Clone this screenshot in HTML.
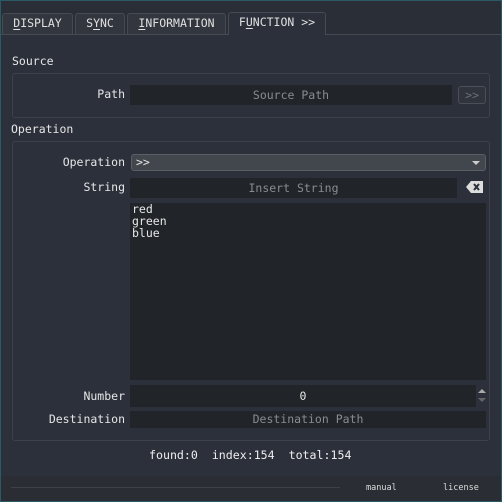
<!DOCTYPE html><html><head><style>
*{box-sizing:border-box;margin:0;padding:0}
body{width:502px;height:502px;background:#2a2e36;font-family:"DejaVu Sans Mono","Liberation Mono",monospace;font-size:11.5px;color:#e6e6e6;position:relative;overflow:hidden}
u{text-decoration:underline;text-underline-offset:2px}
.frame{position:absolute;left:0;top:0;width:502px;height:502px;border:1px solid #2b5a66;}
.a{position:absolute}
.tab{position:absolute;top:13px;height:21px;background:#32363e;border:1px solid #454a53;border-bottom:none;border-radius:3px 3px 0 0;text-align:center;line-height:19px;color:#e0e0e0}
.panel{position:absolute;left:1px;top:34px;width:500px;height:442px;background:#2c303b;border-top:1px solid #454a53}
.box{position:absolute;border:1px solid #3c414c;border-radius:3px}
.inp{position:absolute;background:#212428;color:#8a8d90;text-align:center}
.lbl{position:absolute;text-align:right;width:121px;left:4px}
.foot{position:absolute;left:1px;top:476px;width:500px;height:25px;background:#2a2e34}
</style></head><body>
<div class="tab" style="left:2px;width:71px"><u>D</u>ISPLAY</div>
<div class="tab" style="left:75px;width:50px">S<u>Y</u>NC</div>
<div class="tab" style="left:127px;width:99px"><u>I</u>NFORMATION</div>
<div class="tab" style="left:228px;top:12px;height:23px;width:98px;background:#2c303b;z-index:2">F<u>U</u>NCTION &gt;&gt;</div>
<div class="panel"></div>
<div class="a" style="left:12px;top:54px">Source</div>
<div class="box" style="left:12px;top:73px;width:478px;height:45px"></div>
<div class="lbl" style="top:87px">Path</div>
<div class="inp" style="left:130px;top:85px;width:322px;height:20px;line-height:20px">Source Path</div>
<div class="a" style="left:458px;top:86px;width:28px;height:18px;border:1px solid #4a4f58;border-radius:3px;background:#30343c;color:#6a7078;text-align:center;line-height:16px">&gt;&gt;</div>
<div class="a" style="left:11px;top:122px">Operation</div>
<div class="box" style="left:12px;top:141px;width:478px;height:300px"></div>
<div class="lbl" style="top:155px">Operation</div>
<div class="a" style="left:131px;top:154px;width:355px;height:17px;background:#42474d;border:1px solid #5a5f66;border-radius:3px;padding-left:4px;line-height:15px">&gt;&gt;<span style="position:absolute;right:5px;top:6px;border:4px solid transparent;border-top:4px solid #ccc;border-bottom:0"></span></div>
<div class="lbl" style="top:180px">String</div>
<div class="inp" style="left:130px;top:178px;width:327px;height:20px;line-height:20px">Insert String</div>
<svg class="a" style="left:466px;top:181px" width="17" height="12" viewBox="0 0 17 12"><path d="M5 0H17V12H5L0 6Z" fill="#ddd"/><path d="M8 3L13 9M13 3L8 9" stroke="#2c303b" stroke-width="2"/></svg>
<div class="a" style="left:130px;top:203px;width:356px;height:177px;background:#212428;color:#e8e8e8;padding:0 2px;line-height:12px">red<br>green<br>blue</div>
<div class="lbl" style="top:389px">Number</div>
<div class="inp" style="left:130px;top:385px;width:346px;height:22px;line-height:22px;color:#e8e8e8">0</div>
<div class="a" style="left:478px;top:389px;border:4px solid transparent;border-bottom:4px solid #aaa;border-top:0"></div>
<div class="a" style="left:478px;top:398px;border:4px solid transparent;border-top:4px solid #666;border-bottom:0"></div>
<div class="lbl" style="top:412px">Destination</div>
<div class="inp" style="left:130px;top:411px;width:356px;height:17px;line-height:17px">Destination Path</div>
<div class="a" style="left:149px;top:448px;color:#eee;font-size:11.6px">found:0&nbsp;&nbsp;index:154&nbsp;&nbsp;total:154</div>
<div class="foot"></div>
<div class="a" style="left:11px;top:487px;width:329px;height:1px;background:#3c414a"></div>
<div class="a" style="left:366px;top:483px;font-size:8.5px;color:#ddd">manual</div>
<div class="a" style="left:443px;top:483px;font-size:8.5px;color:#ddd">license</div>
<div class="frame"></div>
</body></html>
